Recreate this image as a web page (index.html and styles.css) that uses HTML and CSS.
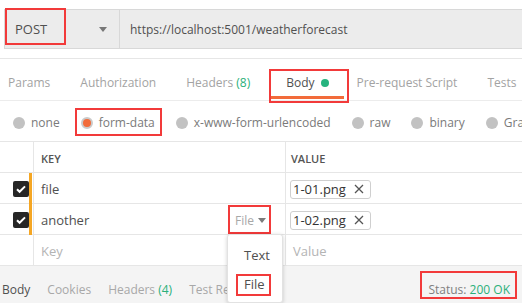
FILE: index.html
```html
<!DOCTYPE html>
<html lang="en">
<head>
    <meta charset="UTF-8">
    <title>POST weatherforecast</title>
    <link rel="stylesheet" href="styles.css">
</head>
<body>
    <div class="top">
        <div class="urlbar">
            <div class="method">
                <span class="mark mark-method"></span>
                <span>POST</span>
                <span class="caret"></span>
            </div>
            <div class="url">https://localhost:5001/weatherforecast</div>
        </div>
    </div>

    <div class="tabs">
        <div class="tab">Params</div>
        <div class="tab">Authorization</div>
        <div class="tab">Headers&nbsp;<em>(8)</em></div>
        <div class="tab active">Body <i class="dot"></i><span class="mark mark-body"></span></div>
        <div class="tab">Pre-request Script</div>
        <div class="tab">Tests</div>
    </div>

    <div class="modes">
        <label class="mode"><i class="radio"></i>none</label>
        <label class="mode on"><i class="radio"></i>form-data<span class="mark mark-mode"></span></label>
        <label class="mode"><i class="radio"></i>x-www-form-urlencoded</label>
        <label class="mode"><i class="radio"></i>raw</label>
        <label class="mode"><i class="radio"></i>binary</label>
        <label class="mode"><i class="radio"></i>GraphQL</label>
    </div>

    <div class="grid">
        <div class="row head">
            <div class="c-check"></div>
            <div class="c-key">KEY</div>
            <div class="c-val">VALUE</div>
        </div>
        <div class="row">
            <div class="c-check"><span class="box"><svg viewBox="0 0 16 16" width="16" height="16"><path d="M4 8.2l2.6 2.6L12 5.4" fill="none" stroke="#fff" stroke-width="2"/></svg></span><span class="bar"></span></div>
            <div class="c-key">file</div>
            <div class="c-val"><span class="chip">1-01.png <svg class="x" viewBox="0 0 10 10" width="10" height="10"><path d="M1 1l8 8M9 1l-8 8" stroke="#555" stroke-width="1.3"/></svg></span></div>
        </div>
        <div class="row">
            <div class="c-check"><span class="box"><svg viewBox="0 0 16 16" width="16" height="16"><path d="M4 8.2l2.6 2.6L12 5.4" fill="none" stroke="#fff" stroke-width="2"/></svg></span><span class="bar"></span></div>
            <div class="c-key">another
                <span class="type">File <span class="caret small"></span><span class="mark mark-type"></span></span>
                <div class="menu">
                    <div class="item">Text</div>
                    <div class="item">File<span class="mark mark-file"></span></div>
                </div>
            </div>
            <div class="c-val"><span class="chip">1-02.png <svg class="x" viewBox="0 0 10 10" width="10" height="10"><path d="M1 1l8 8M9 1l-8 8" stroke="#555" stroke-width="1.3"/></svg></span></div>
        </div>
        <div class="row">
            <div class="c-check"></div>
            <div class="c-key hint">Key</div>
            <div class="c-val hint">Value</div>
        </div>
    </div>

    <div class="foot">
        <div class="ftab">Body</div>
        <div class="ftab dim">Cookies</div>
        <div class="ftab dim">Headers&nbsp;<em>(4)</em></div>
        <div class="ftab dim">Test Results</div>
        <div class="status">Status: <em>200 OK</em><span class="mark mark-status"></span></div>
    </div>
</body>
</html>
```

FILE: styles.css
```css
/* base */
html,body{
    margin: 0;
    padding: 0;
}
body{
    width: 522px;
    height: 303px;
    overflow: hidden;
    background: #fff;
    font-family: "Open Sans", "Liberation Sans", sans-serif;
    font-size: 12px;
    color: #505050;
}
em{
    font-style: normal;
    color: #2bb07a;
}

/* red annotation boxes */
.mark{
    position: absolute;
    border: 2px solid #f23a3a;
    pointer-events: none;
}

/* url bar */
.top{
    height: 59px;
    box-sizing: border-box;
    padding: 9px 0 0 4px;
    border-bottom: 1px solid #e6e6e6;
}
.urlbar{
    display: flex;
    height: 40px;
    box-sizing: border-box;
    border: 1px solid #d8d8d8;
    border-right: none;
    background: #ececec;
}
.method{
    position: relative;
    width: 115px;
    box-sizing: border-box;
    display: flex;
    align-items: center;
    padding-left: 10px;
    border-right: 1px solid #d8d8d8;
    font-size: 13px;
}
.mark-method{
    left: 0;
    top: -2px;
    width: 61px;
    height: 37px;
    box-sizing: border-box;
}
.caret{
    width: 0;
    height: 0;
    border-left: 4px solid transparent;
    border-right: 4px solid transparent;
    border-top: 5px solid #777;
    margin-left: auto;
    margin-right: 12px;
}
.url{
    display: flex;
    align-items: center;
    padding-left: 10px;
}

/* request tabs */
.tabs{
    display: flex;
    height: 42px;
    box-sizing: border-box;
    padding-left: 8px;
    border-bottom: 1px solid #ececec;
    white-space: nowrap;
}
.tab{
    position: relative;
    display: flex;
    align-items: center;
    padding-top: 6px;
    margin-right: 30px;
    color: #a3a3a3;
}
.tab.active{
    margin-left: 6px;
    margin-right: 28px;
    color: #505050;
}
.tab.active:after{
    content: "";
    position: absolute;
    left: -15px;
    right: -15px;
    bottom: 1px;
    height: 3px;
    background: #f26b3a;
}
.dot{
    display: inline-block;
    width: 8px;
    height: 8px;
    border-radius: 50%;
    background: #26b47f;
    margin-left: 6px;
}
.mark-body{
    left: -17px;
    right: -20px;
    top: 10px;
    bottom: -3px;
}

/* body modes */
.modes{
    display: flex;
    align-items: center;
    height: 41px;
    box-sizing: border-box;
    padding: 3px 0 0 13px;
    border-bottom: 1px solid #e6e6e6;
    white-space: nowrap;
    color: #7a7a7a;
}
.mode{
    position: relative;
    display: flex;
    align-items: center;
    margin-right: 21px;
}
.radio{
    width: 12px;
    height: 12px;
    border-radius: 50%;
    background: #c2c2c2;
    margin-right: 6px;
    box-sizing: border-box;
}
.mode.on .radio{
    background: #f26b3a;
    border: 2px solid #cacaca;
}
.mark-mode{
    left: -6px;
    right: -7px;
    top: -6px;
    bottom: -5px;
}

/* key / value table */
.row{
    display: flex;
    height: 31px;
    box-sizing: border-box;
    border-bottom: 1px solid #e6e6e6;
}
.row > div{
    display: flex;
    align-items: center;
    padding-top: 2px;
}
.c-check{
    position: relative;
    width: 33px;
    box-sizing: border-box;
    padding-left: 13px;
}
.c-key{
    position: relative;
    width: 253px;
    box-sizing: border-box;
    padding-left: 7px;
    border-left: 1px solid #e6e6e6;
    border-right: 1px solid #e6e6e6;
    font-size: 13px;
}
.c-val{
    flex: 1;
    padding-left: 4px;
    font-size: 13px;
}
.head .c-key,
.head .c-val{
    font-size: 11px;
    font-weight: 600;
    color: #555;
}
.head .c-val{
    padding-left: 5px;
}
.hint{
    color: #b4b4b4;
}
.c-val.hint{
    padding-left: 7px;
}
.box{
    display: block;
    width: 16px;
    height: 16px;
    border-radius: 2px;
    background: #262626;
}
.box svg{
    display: block;
}
.bar{
    position: absolute;
    right: 1px;
    top: 0;
    bottom: -1px;
    width: 3px;
    background: #f5a623;
}
.chip{
    display: inline-flex;
    align-items: center;
    height: 19px;
    padding: 0 6px 0 2px;
    border: 1px solid #cfcfcf;
    border-radius: 3px;
    box-sizing: border-box;
    color: #333;
}
.chip .x{
    margin-left: 8px;
}

/* type switch and its menu */
.type{
    position: relative;
    margin-left: auto;
    margin-right: 19px;
    color: #a8a8a8;
    display: flex;
    align-items: center;
    font-size: 12px;
}
.caret.small{
    margin: 0 0 0 4px;
    border-top-color: #7c7c7c;
}
.mark-type{
    left: -7px;
    right: -5px;
    top: -7px;
    bottom: -5px;
}
.menu{
    position: absolute;
    left: 193px;
    top: 30px;
    width: 56px;
    height: 69px;
    box-sizing: border-box;
    background: #fff;
    border: 1px solid #e2e2e2;
    border-radius: 3px;
    box-shadow: 0 1px 4px rgba(0,0,0,0.18);
    padding-top: 8px;
    z-index: 2;
}
.item{
    position: relative;
    padding-left: 16px;
    height: 29px;
    line-height: 24px;
    font-size: 13px;
}
.mark-file{
    left: 8px;
    width: 35px;
    top: 2px;
    height: 22px;
    box-sizing: border-box;
}

/* response bar */
.foot{
    display: flex;
    align-items: center;
    height: 37px;
    box-sizing: border-box;
    padding: 10px 0 0 2px;
    background: #f4f4f4;
    white-space: nowrap;
}
.ftab{
    margin-right: 17px;
}
.ftab.dim{
    color: #a8a8a8;
}
.status{
    position: relative;
    margin-left: auto;
    margin-right: 12px;
    color: #808080;
}
.mark-status{
    left: -8px;
    right: -7px;
    top: -10px;
    bottom: -1px;
}
```
